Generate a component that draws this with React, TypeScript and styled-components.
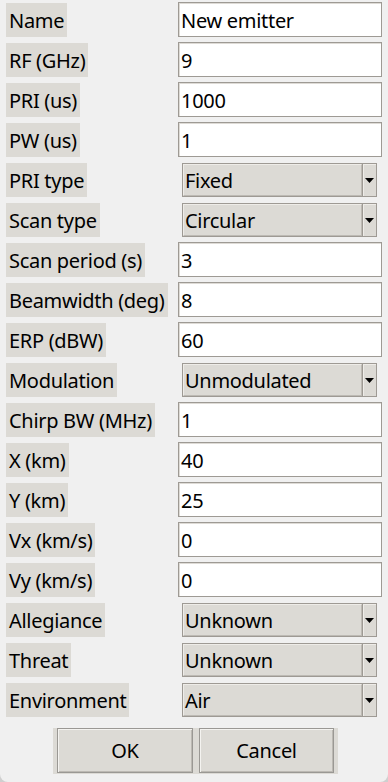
import React from "react";
import styled, { createGlobalStyle } from "styled-components";

const Global = createGlobalStyle`
  html, body { margin: 0; padding: 0; background: #cfcfcf; }
  body { font-family: "Noto Sans", "Open Sans", sans-serif; }
`;

const Window = styled.div`
  width: 388px;
  height: 782px;
  background: #f0f0f0;
  border-bottom-left-radius: 8px;
  border-bottom-right-radius: 8px;
  box-sizing: border-box;
  padding: 3px 0 0 6px;
  overflow: hidden;
`;

const Form = styled.div`
  display: grid;
  grid-template-columns: 172px 204px;
  grid-auto-rows: 34px;
  row-gap: 6px;
`;

const Label = styled.div`
  justify-self: start;
  align-self: stretch;
  display: flex;
  align-items: center;
  background: #dcdad5;
  padding: 1px 3px 0;
  font-size: 20px;
  color: #000;
  white-space: nowrap;
  letter-spacing: -0.3px;
`;

const Entry = styled.div`
  box-sizing: border-box;
  height: 35px;
  margin-top: -1px;
  background: #fff;
  border: 1px solid #9e9a94;
  box-shadow: inset 1px 1px 0 #dedbd6;
  display: flex;
  align-items: center;
  padding: 1px 0 0 2px;
  font-size: 20px;
  letter-spacing: -0.3px;
`;

const Combo = styled.div`
  box-sizing: border-box;
  margin: 0 5px 0 4px;
  height: 34px;
  display: flex;
  background: #dcdad5;
  border: 1px solid #9e9a94;
`;

const ComboText = styled.div`
  flex: 1;
  display: flex;
  align-items: center;
  padding: 1px 0 0 1px;
  font-size: 20px;
  letter-spacing: -0.3px;
  border-top: 1px solid #eeece8;
  border-left: 1px solid #eeece8;
  border-bottom: 1px solid #bdbab4;
  border-right: 1px solid #bdbab4;
`;

const Arrow = styled.div`
  width: 13px;
  display: flex;
  align-items: center;
  justify-content: center;
  border-left: 1px solid #9e9a94;
  box-shadow: inset 1px 1px 0 #eeece8;
`;

const ButtonBar = styled.div`
  margin: 11px 0 0 47px;
  width: 285px;
  height: 46px;
  background: #dcdad5;
  display: flex;
  gap: 6px;
  padding: 0 0 0 4px;
  box-sizing: border-box;
`;

const Button = styled.div<{ $w: number }>`
  box-sizing: border-box;
  width: ${(p) => p.$w}px;
  height: 45px;
  background: #dcdad5;
  border: 1px solid #9a9894;
  box-shadow: inset 1px 1px 0 #f4f3f0, inset -1px -1px 0 #bcb9b3;
  display: flex;
  align-items: center;
  justify-content: center;
  font-size: 20px;
  letter-spacing: -0.3px;
`;

type Row = { label: string; value: string; combo?: boolean };

const rows: Row[] = [
  { label: "Name", value: "New emitter" },
  { label: "RF (GHz)", value: "9" },
  { label: "PRI (us)", value: "1000" },
  { label: "PW (us)", value: "1" },
  { label: "PRI type", value: "Fixed", combo: true },
  { label: "Scan type", value: "Circular", combo: true },
  { label: "Scan period (s)", value: "3" },
  { label: "Beamwidth (deg)", value: "8" },
  { label: "ERP (dBW)", value: "60" },
  { label: "Modulation", value: "Unmodulated", combo: true },
  { label: "Chirp BW (MHz)", value: "1" },
  { label: "X (km)", value: "40" },
  { label: "Y (km)", value: "25" },
  { label: "Vx (km/s)", value: "0" },
  { label: "Vy (km/s)", value: "0" },
  { label: "Allegiance", value: "Unknown", combo: true },
  { label: "Threat", value: "Unknown", combo: true },
  { label: "Environment", value: "Air", combo: true },
];

export default function App() {
  return (
    <>
      <Global />
      <Window>
        <Form>
          {rows.map((r) => (
            <React.Fragment key={r.label}>
              <Label>{r.label}</Label>
              {r.combo ? (
                <Combo>
                  <ComboText>{r.value}</ComboText>
                  <Arrow>
                    <svg width="9" height="5" viewBox="0 0 9 5">
                      <path d="M0 0 H9 L4.5 5 Z" fill="#000" />
                    </svg>
                  </Arrow>
                </Combo>
              ) : (
                <Entry>{r.value}</Entry>
              )}
            </React.Fragment>
          ))}
        </Form>
        <ButtonBar>
          <Button $w={136}>OK</Button>
          <Button $w={135}>Cancel</Button>
        </ButtonBar>
      </Window>
    </>
  );
}
